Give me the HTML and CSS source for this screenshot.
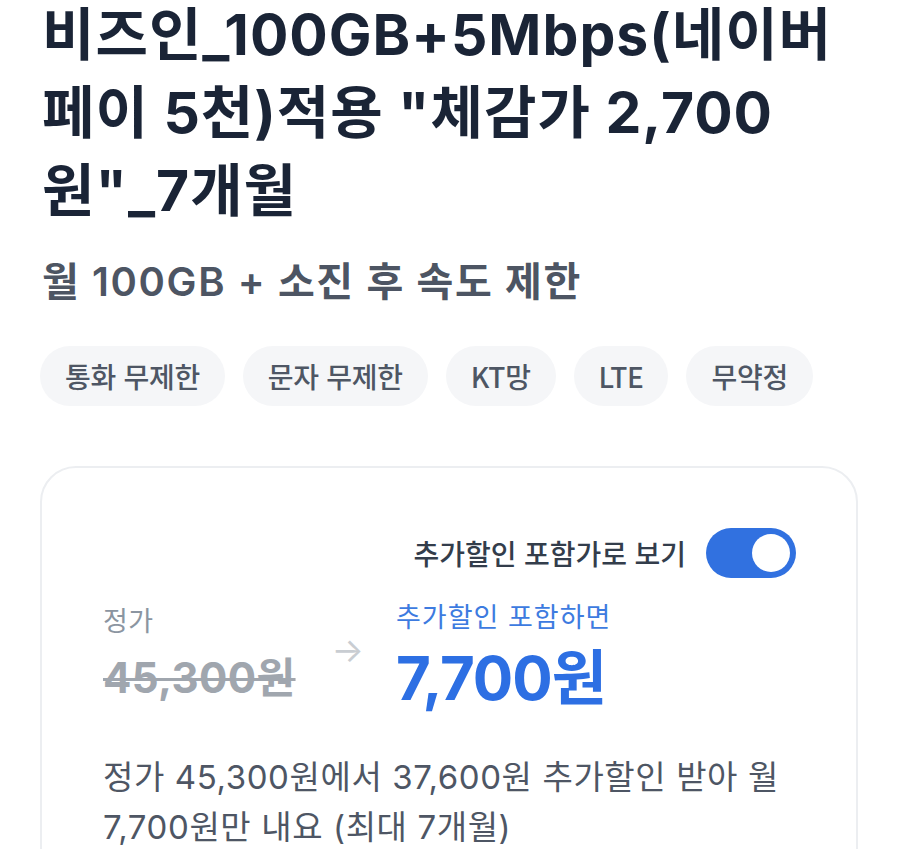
FILE: index.html
```html
<!DOCTYPE html>
<html lang="ko">
<head>
<meta charset="utf-8">
<link rel="stylesheet" href="styles.css">
</head>
<body>
<main class="page">
  <h1 class="title">비즈인_100GB+5Mbps(네이버 페이 5천)적용 "체감가 2,700 원"_7개월</h1>
  <p class="subtitle">월 100GB + 소진 후 속도 제한</p>
  <ul class="chips">
    <li class="chip">통화 무제한</li>
    <li class="chip">문자 무제한</li>
    <li class="chip">KT망</li>
    <li class="chip">LTE</li>
    <li class="chip">무약정</li>
  </ul>
  <section class="card">
    <div class="toggle-row">
      <span class="toggle-label">추가할인 포함가로 보기</span>
      <span class="toggle"><span class="knob"></span></span>
    </div>
    <div class="prices">
      <div class="price-col">
        <div class="price-label">정가</div>
        <div class="price-old">45,300원</div>
      </div>
      <div class="arrow">→</div>
      <div class="price-col">
        <div class="price-label blue">추가할인 포함하면</div>
        <div class="price-new">7,700원</div>
      </div>
    </div>
    <p class="desc">정가 45,300원에서 37,600원 추가할인 받아 월 7,700원만 내요 (최대 7개월)</p>
  </section>
</main>
</body>
</html>
```

FILE: styles.css
```css
* { box-sizing: border-box; }
html, body { margin: 0; padding: 0; background: #ffffff; }
body {
  font-family: "Inter", "Noto Sans CJK KR", sans-serif;
  color: #1a2436;
}
.page {
  padding: 0 40px 0 40px;
  overflow: hidden;
  height: 849px;
}
.title {
  margin: -4px 0 0 2px;
  font-size: 57px;
  font-weight: 700;
  line-height: 78px;
  letter-spacing: 1px;
  color: #1a2436;
  width: 816px;
  word-break: keep-all;
}
.subtitle {
  margin: 24px 0 0 2px;
  font-size: 40px;
  font-weight: 600;
  line-height: 56px;
  color: #4d5563;
  letter-spacing: 1.6px;
}
.chips {
  list-style: none;
  margin: 36px 0 0 0;
  padding: 0;
  display: flex;
  gap: 18px;
}
.chip {
  height: 60px;
  padding: 0 25px;
  border-radius: 30px;
  background: #f5f6f8;
  color: #4e5664;
  font-family: "Noto Sans CJK KR", sans-serif;
  font-size: 28px;
  font-weight: 500;
  line-height: 60px;
  letter-spacing: -0.3px;
}
.card {
  margin-top: 60px;
  width: 818px;
  border: 2px solid #eceef1;
  border-radius: 36px;
  padding: 60px 60px 40px 61px;
  min-height: 420px;
}
.toggle-row {
  display: flex;
  justify-content: flex-end;
  align-items: center;
  gap: 20px;
}
.toggle-label {
  font-size: 28px;
  font-weight: 500;
  color: #333d4b;
  letter-spacing: 0;
}
.toggle {
  width: 90px;
  height: 50px;
  border-radius: 25px;
  background: #3171e0;
  display: flex;
  align-items: center;
  justify-content: flex-end;
  padding-right: 6px;
}
.knob {
  width: 38px;
  height: 38px;
  border-radius: 50%;
  background: #ffffff;
}
.prices {
  display: flex;
  align-items: flex-start;
  margin-top: 24px;
}
.price-col { display: flex; flex-direction: column; }
.price-label {
  font-size: 27px;
  line-height: 40px;
  color: #8b95a1;
  letter-spacing: 0.5px;
}
.price-label.blue { color: #3d7be0; margin-top: -4px; letter-spacing: 1px; }
.price-old {
  margin-top: 8px;
  font-size: 42px;
  font-weight: 700;
  line-height: 56px;
  color: #a0a6ae;
  text-decoration: line-through;
  text-decoration-thickness: 3px;
  letter-spacing: 0.4px;
}
.arrow {
  margin: 28px 32px 0 36px;
  font-size: 34px;
  color: #c9cdd2;
  line-height: 40px;
}
.price-new {
  margin-top: 4px;
  font-size: 60px;
  font-weight: 700;
  line-height: 72px;
  color: #2d6fe3;
  letter-spacing: -1px;
}
.desc {
  margin: 38px 0 0 0;
  font-size: 33px;
  line-height: 50px;
  color: #4e5664;
  letter-spacing: 0.6px;
  word-break: keep-all;
}
```
